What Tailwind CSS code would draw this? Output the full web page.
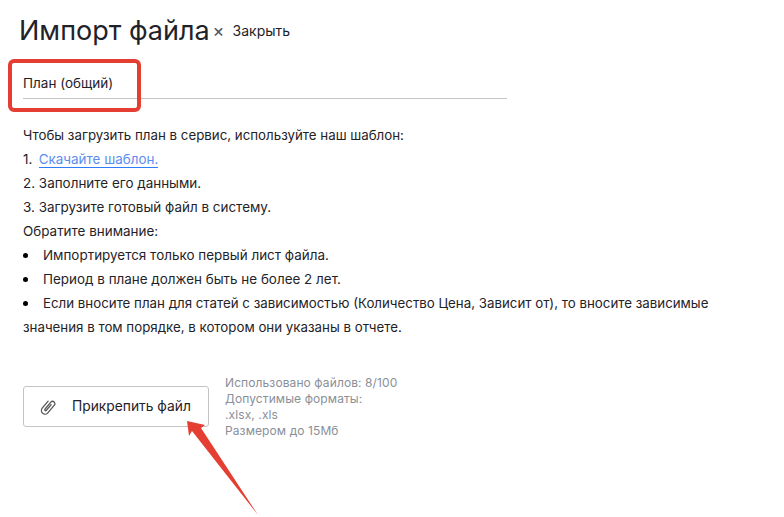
<!DOCTYPE html>
<html lang="ru"><head><meta charset="utf-8"><script src="https://cdn.jsdelivr.net/npm/@tailwindcss/browser@4"></script></head>
<body class="bg-white">
<div class="relative w-[784px] h-[517px] overflow-hidden font-['Inter','Noto_Sans',sans-serif] text-[#1f2329]">
  <div class="flex items-center pl-[19px] pt-[13px] h-[63px] pb-[14px]">
    <h1 class="text-[27px] leading-[36px] font-normal">Импорт файла</h1>
    <span class="ml-[3px] text-[18px] leading-[20px] text-[#4b5563]">×</span>
    <span class="ml-[8px] text-[14px] leading-[20px]">Закрыть</span>
  </div>
  <div class="ml-[23px] w-[484px] h-[36px] border-b border-[#c4c4c4] pt-[11px] text-[13.5px] leading-[18px]">План (общий)</div>
  <div class="ml-[23px] mt-[24px] w-[730px] text-[13.45px] leading-[24px]">
    <p class="text-[13.3px]">Чтобы загрузить план в сервис, используйте наш шаблон:</p>
    <p>1. <a class="ml-[2.5px] text-[#5b8def] border-b border-[#2f7df6]">Скачайте шаблон.</a></p>
    <p>2. Заполните его данными.</p>
    <p>3. Загрузите готовый файл в систему.</p>
    <p>Обратите внимание:</p>
    <ul class="list-none">
      <li class="relative indent-[20px] before:absolute before:left-0 before:top-[10px] before:w-[5px] before:h-[5px] before:rounded-full before:bg-black">Импортируется только первый лист файла.</li>
      <li class="relative indent-[20px] before:absolute before:left-0 before:top-[10px] before:w-[5px] before:h-[5px] before:rounded-full before:bg-black">Период в плане должен быть не более 2 лет.</li>
      <li class="relative indent-[20px] text-[13.3px] before:absolute before:left-0 before:top-[10px] before:w-[5px] before:h-[5px] before:rounded-full before:bg-black">Если вносите план для статей с зависимостью (Количество Цена, Зависит от), то вносите зависимые значения в том порядке, в котором они указаны в отчете.</li>
    </ul>
  </div>
  <div class="flex ml-[23px] mt-[36px] gap-[16px]">
    <button class="mt-[11px] w-[186px] h-[41px] border border-[#c4c4c4] rounded-[3px] flex items-center pl-[13px] text-[13.8px]">
      <svg class="w-[22px] h-[22px] mr-[13px]" viewBox="0 0 24 24" fill="none" stroke="#555" stroke-width="1.4" stroke-linecap="round" stroke-linejoin="round"><g transform="rotate(40 12 12)"><path d="M8 7v10a4 4 0 0 0 8 0V6a2.5 2.5 0 0 0-5 0v10a1 1 0 0 0 2 0V8"/></g></svg>
      Прикрепить файл
    </button>
    <div class="text-[12px] leading-[16px] tracking-[0.1px] text-[#8a8f98]">
      <p>Использовано файлов: 8/100</p><p>Допустимые форматы:</p><p>.xlsx, .xls</p><p>Размером до 15Мб</p>
    </div>
  </div>
  <div class="absolute left-[8px] top-[59px] w-[133px] h-[53px] border-[4px] border-[#e53e32] rounded-[6px]"></div>
  <svg class="absolute left-0 top-0 w-[784px] h-[517px] pointer-events-none" viewBox="0 0 784 517"><polygon points="187,421 205,425 201,428 258,515 192,431 189,436" fill="#e53e32"/></svg>
</div>
</body></html>
